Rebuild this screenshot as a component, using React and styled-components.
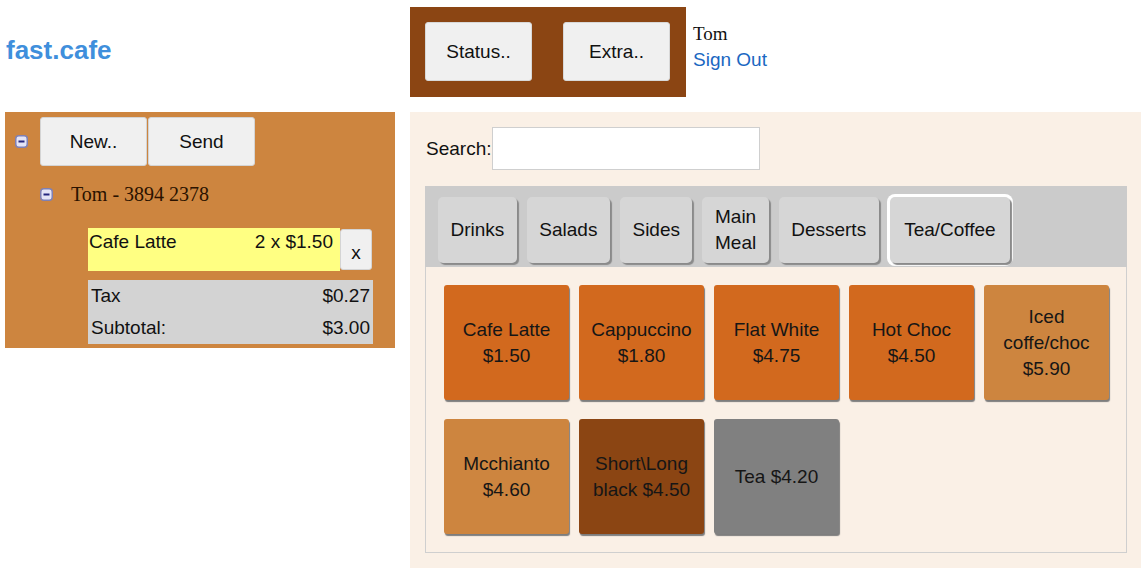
import React from "react";
import styled, { createGlobalStyle } from "styled-components";

const GlobalStyle = createGlobalStyle`
  body {
    margin: 0;
    background: #fff;
    font-family: "Liberation Sans", Arial, sans-serif;
  }
`;

const TABS = ["Drinks", "Salads", "Sides", "Main Meal", "Desserts", "Tea/Coffee"];

const PRODUCTS = [
  { label: "Cafe Latte $1.50", color: "#d2691e" },
  { label: "Cappuccino $1.80", color: "#d2691e" },
  { label: "Flat White $4.75", color: "#d2691e" },
  { label: "Hot Choc $4.50", color: "#d2691e" },
  { label: "Iced coffe/choc $5.90", color: "#cd853f" },
  { label: "Mcchianto $4.60", color: "#cd853f" },
  { label: "Short\\Long black $4.50", color: "#8b4513" },
  { label: "Tea $4.20", color: "#808080" },
];

const Toggle = () => (
  <ToggleIcon width="13" height="13" viewBox="0 0 13 13">
    <rect x="0.75" y="0.75" width="11.5" height="11.5" rx="3" fill="#e4e4f6" stroke="#7f80b4" strokeWidth="1.5" />
    <rect x="3.5" y="5.5" width="6" height="2" fill="#25267e" />
  </ToggleIcon>
);

const App = () => {
  return (
    <>
      <GlobalStyle />
      <Page>
        <Logo>fast.cafe</Logo>

        <TopBar>
          <Toolbar>
            <ToolButton>Status..</ToolButton>
            <ToolButton>Extra..</ToolButton>
          </Toolbar>
          <User>
            <UserName>Tom</UserName>
            <SignOut href="#">Sign Out</SignOut>
          </User>
        </TopBar>

        <OrderPanel>
          <Node>
            <Toggle />
            <ButtonRow>
              <PlainButton>New..</PlainButton>
              <PlainButton>Send</PlainButton>
            </ButtonRow>
            <Children>
              <ChildNode>
                <Toggle />
                <Customer>Tom - 3894 2378</Customer>
              </ChildNode>
              <Order>
                <OrderLine>
                  <LineItem>
                    <span>Cafe Latte</span>
                    <span>2 x $1.50</span>
                  </LineItem>
                  <RemoveButton>x</RemoveButton>
                </OrderLine>
                <Totals>
                  <TotalRow>
                    <span>Tax</span>
                    <span>$0.27</span>
                  </TotalRow>
                  <TotalRow>
                    <span>Subtotal:</span>
                    <span>$3.00</span>
                  </TotalRow>
                </Totals>
              </Order>
            </Children>
          </Node>
        </OrderPanel>

        <MenuPanel>
          <SearchRow>
            <label htmlFor="search">Search:</label>
            <SearchInput id="search" />
          </SearchRow>

          <TabBar>
            {TABS.map((tab) => (
              <Tab key={tab} $active={tab === "Tea/Coffee"}>
                {tab === "Main Meal" ? (
                  <>
                    Main
                    <br />
                    Meal
                  </>
                ) : (
                  tab
                )}
              </Tab>
            ))}
          </TabBar>

          <Products>
            {PRODUCTS.map((p) => (
              <Product key={p.label} $color={p.color}>
                {p.label}
              </Product>
            ))}
          </Products>
        </MenuPanel>
      </Page>
    </>
  );
};

const Page = styled.div`
  display: grid;
  grid-template-columns: 390px 731px;
  column-gap: 15px;
  row-gap: 15px;
  align-items: start;
  padding: 7px 0 6px 5px;
`;

const Logo = styled.div`
  align-self: center;
  padding: 0 0 4px 1px;
  color: #3f8fdc;
  font-weight: bold;
  font-size: 26px;
  line-height: 30px;
`;

const TopBar = styled.div`
  display: flex;
  align-items: flex-start;
  gap: 7px;
`;

const Toolbar = styled.div`
  display: flex;
  gap: 31px;
  padding: 15px 16px 16px 15px;
  background: #8b4513;
`;

const ToolButton = styled.button`
  width: 107px;
  height: 59px;
  background: #f0f0f0;
  border: 1px solid #d8d8d8;
  border-radius: 3px;
  font-family: "Liberation Sans", Arial, sans-serif;
  font-size: 19px;
  color: #111;
`;

const User = styled.div`
  display: flex;
  flex-direction: column;
  padding-top: 15px;
`;

const UserName = styled.span`
  font-family: "Liberation Serif", "Times New Roman", serif;
  font-size: 19px;
  line-height: 24px;
  color: #111;
`;

const SignOut = styled.a`
  font-size: 19px;
  line-height: 28px;
  color: #1b67c2;
  text-decoration: none;
`;

const OrderPanel = styled.div`
  background: #cd853f;
  padding: 5px 22px 4px 10px;
`;

const Node = styled.div`
  display: grid;
  grid-template-columns: 13px 1fr;
  column-gap: 12px;
  align-items: center;
`;

const ToggleIcon = styled.svg`
  display: block;
`;

const ButtonRow = styled.div`
  display: flex;
  gap: 1px;
`;

const PlainButton = styled.button`
  width: 107px;
  height: 49px;
  background: #f0f0f0;
  border: 1px solid #d4d4d4;
  border-radius: 3px;
  font-family: "Liberation Sans", Arial, sans-serif;
  font-size: 19px;
  color: #111;
`;

const Children = styled.div`
  grid-column: 2;
  padding-top: 16px;
`;

const ChildNode = styled.div`
  display: flex;
  align-items: center;
  gap: 18px;
`;

const Customer = styled.span`
  font-family: "Liberation Serif", "Times New Roman", serif;
  font-size: 20px;
  line-height: 24px;
  color: #2a1200;
`;

const Order = styled.div`
  display: flex;
  flex-direction: column;
  gap: 9px;
  margin: 22px 0 0 48px;
  width: 285px;
`;

const OrderLine = styled.div`
  display: flex;
  align-items: stretch;
`;

const LineItem = styled.div`
  flex: 0 0 252px;
  display: flex;
  justify-content: space-between;
  height: 43px;
  padding: 3px 7px 0 1px;
  box-sizing: border-box;
  background: #ffff82;
  font-size: 19px;
  line-height: 22px;
  color: #111;
`;

const RemoveButton = styled.button`
  width: 32px;
  margin: 1px 0;
  padding: 6px 0 0;
  background: #f0f0f0;
  border: 1px solid #d4d4d4;
  border-radius: 3px;
  font-family: "Liberation Sans", Arial, sans-serif;
  font-size: 19px;
  color: #111;
`;

const Totals = styled.div`
  background: #d3d3d3;
  padding: 0 3px;
`;

const TotalRow = styled.div`
  display: flex;
  justify-content: space-between;
  font-size: 19px;
  line-height: 32px;
  color: #111;
`;

const MenuPanel = styled.div`
  background: #faf0e6;
  padding: 15px 14px 15px 15px;
`;

const SearchRow = styled.div`
  display: flex;
  align-items: center;
  padding-left: 1px;
  font-size: 19px;
  color: #111;
`;

const SearchInput = styled.input`
  width: 268px;
  height: 43px;
  box-sizing: border-box;
  margin-left: 1px;
  background: #fff;
  border: 1px solid #cfcfcf;
`;

const TabBar = styled.div`
  display: flex;
  align-items: flex-end;
  gap: 10px;
  margin-top: 16px;
  padding: 11px 13px 4px;
  background: #cbcbcb;
`;

const Tab = styled.div`
  display: flex;
  align-items: center;
  justify-content: center;
  height: 66px;
  padding: 0 ${(p) => (p.$active ? "14.5px" : "12.5px")};
  margin-left: ${(p) => (p.$active ? "1px" : "0")};
  background: #d6d6d6;
  border-radius: 5px;
  box-shadow: ${(p) =>
    p.$active
      ? "2px 2px 1px #8a8a8a, 0 0 0 3px #fff"
      : "2px 2px 1px #8a8a8a"};
  font-size: 19px;
  line-height: 26px;
  text-align: center;
  color: #111;
  white-space: nowrap;
`;

const Products = styled.div`
  display: grid;
  grid-template-columns: repeat(5, 125px);
  grid-auto-rows: 115px;
  column-gap: 10px;
  row-gap: 19px;
  padding: 18px 17px 18px 18px;
  border: 1px solid #cfcfcf;
  border-top: none;
`;

const Product = styled.div`
  display: flex;
  align-items: center;
  justify-content: center;
  padding: 0 6px;
  background: ${(p) => p.$color};
  border-radius: 3px;
  box-shadow: 1px 2px 1px #7d7d7d;
  font-size: 19px;
  line-height: 26px;
  text-align: center;
  color: #161616;
`;

export default App;
